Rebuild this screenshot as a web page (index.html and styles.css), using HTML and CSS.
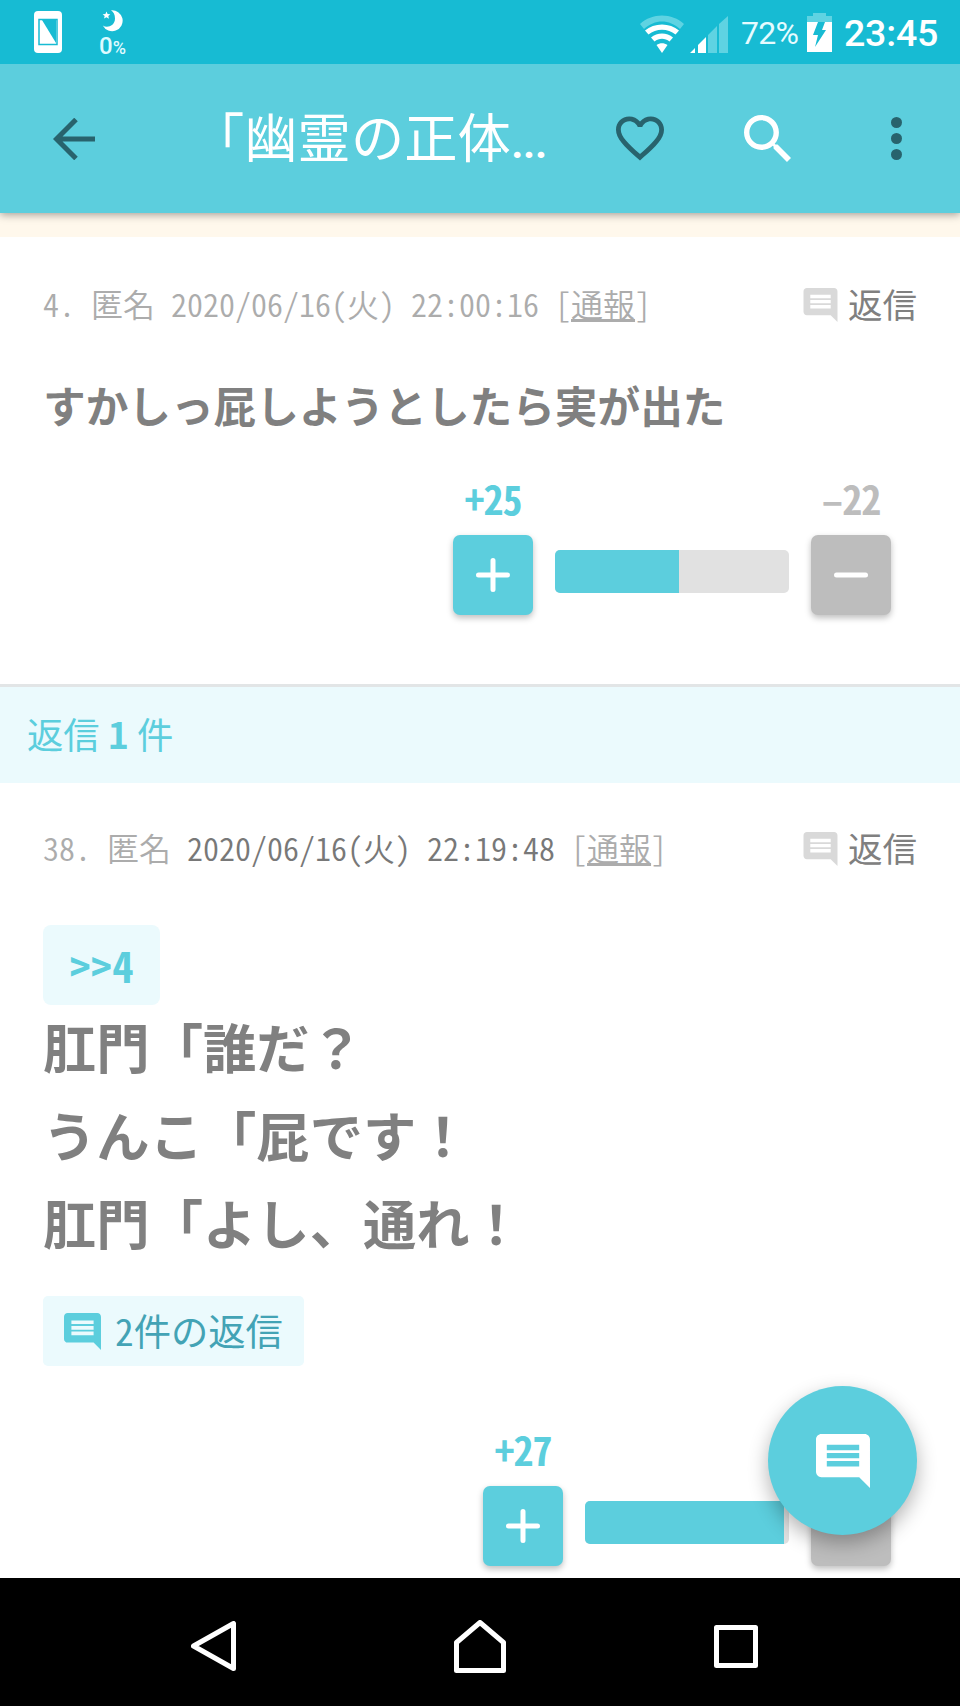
FILE: index.html
```html
<!DOCTYPE html>
<html lang="ja">
<head>
    <meta charset="UTF-8">
    <meta name="viewport" content="width=device-width, initial-scale=1.0">
    <title>「幽霊の正体...</title>
    <link rel="stylesheet" href="styles.css">
</head>
<body>
    <svg width="0" height="0" class="defs">
        <symbol id="comment" viewBox="2 2 20 20">
            <path fill-rule="evenodd" d="M21.99 4c0-1.1-.89-2-1.99-2H4c-1.1 0-2 .9-2 2v12c0 1.1.9 2 2 2h14l4 4-.01-18zM18 14H6v-2h12v2zm0-3H6V9h12v2zm0-3H6V6h12v2z"/>
        </symbol>
    </svg>

    <div class="screen">
        <div class="status-bar">
            <svg class="icon-phone" width="28" height="42" viewBox="0 0 28 42">
                <rect width="28" height="42" rx="4" fill="#fff"/>
                <rect x="5" y="8.500" width="18" height="25" fill="#fff" stroke="#17bbd3" stroke-width="1.500"/>
                <path d="M8 9L22 32V9z" fill="#17bbd3"/>
            </svg>
            <div class="battery-care">
                <svg width="22" height="22" viewBox="0 0 22 22" fill="#fff">
                    <path d="M9 .3A10.500 10.500 0 1 1 .8 15.500C5 18.500 13 16 13 8.500C13 4.500 11.500 2 9 .3z"/>
                    <path d="M4.500 1.500L5.600 4 8.300 4.200 6.300 6 6.900 8.800 4.500 7.300 2 8.600 2.700 6 .6 4.200 3.400 4z"/>
                </svg>
                <span>0<small>%</small></span>
            </div>
            <svg class="icon-wifi" width="44" height="38" viewBox="0 0 44 38">
                <path d="M0 9C12-2.500 32-2.500 44 9L40 14C29 4 15 4 4 14z" fill="#5fd3e2"/>
                <g fill="#fff">
                    <path d="M5 15.500C14 7.500 30 7.500 39 15.500L35.500 19.500C28 13 16 13 8.500 19.500z"/>
                    <path d="M11 22.500C17 17 27 17 33 22.500L29.500 26.500C25 22.800 19 22.800 14.500 26.500z"/>
                    <path d="M16.500 30C20 27.500 24 27.500 27.500 30L22 38z"/>
                </g>
            </svg>
            <svg class="icon-signal" width="38" height="37" viewBox="0 0 38 37">
                <path d="M0 37L5 32V37zM8 29L16 21V37H8z" fill="#fff"/>
                <path d="M18 19L27 10V37H18zM29 8L38 0V37H29z" fill="#5fd3e2"/>
            </svg>
            <span class="percent">72%</span>
            <svg class="icon-battery" width="25" height="39" viewBox="0 0 25 39">
                <path d="M6 0H19V3H25V9H0V3H6z" fill="#5fd3e2"/>
                <path d="M0 9H25V39H0z" fill="#fff"/>
                <path d="M11 9H18L15 17H19L8 34L11 22H6z" fill="#17bbd3"/>
            </svg>
            <span class="clock">23:45</span>
        </div>

        <div class="app-bar">
            <svg class="icon-back" width="42" height="42" viewBox="0 0 42 42" fill="none" stroke="#28636d" stroke-width="5">
                <path d="M42 21H3M23 1.500L3.500 21L23 40.500"/>
            </svg>
            <h1>「幽霊の正体<span class="dots">...</span></h1>
            <svg class="icon-heart" width="48" height="45" viewBox="2 3 20 18.350" fill="#28636d">
                <path d="M16.500 3c-1.740 0-3.410.81-4.500 2.090C10.910 3.810 9.240 3 7.500 3 4.420 3 2 5.420 2 8.500c0 3.780 3.400 6.860 8.550 11.540L12 21.350l1.450-1.320C18.600 15.360 22 12.280 22 8.500 22 5.420 19.580 3 16.500 3zm-4.400 15.550l-.1.100-.1-.1C7.140 14.240 4 11.390 4 8.500 4 6.500 5.500 5 7.500 5c1.540 0 3.040.99 3.570 2.360h1.870C13.460 5.990 14.960 5 16.500 5c2 0 3.500 1.500 3.500 3.500 0 2.890-3.140 5.740-7.900 10.050z"/>
            </svg>
            <svg class="icon-search" width="47" height="47" viewBox="3 3 17.490 17.490" fill="#fff">
                <path d="M15.500 14h-.79l-.28-.27C15.410 12.590 16 11.110 16 9.500 16 5.910 13.090 3 9.500 3S3 5.910 3 9.500 5.910 16 9.500 16c1.610 0 3.090-.59 4.230-1.570l.27.28v.79l5 4.990L20.490 19l-4.990-5zm-6 0C7.010 14 5 11.990 5 9.500S7.010 5 9.500 5 14 7.010 14 9.500 11.990 14 9.500 14z"/>
            </svg>
            <svg class="icon-more" width="11" height="43" viewBox="0 0 11 43" fill="#28636d">
                <circle cx="5.500" cy="5.500" r="5.500"/>
                <circle cx="5.500" cy="21.500" r="5.500"/>
                <circle cx="5.500" cy="37.500" r="5.500"/>
            </svg>
        </div>

        <div class="content">
            <div class="ad-edge"></div>

            <div class="post post-first">
                <div class="post-head">
                    <p class="meta">4. 匿名 2020/06/16(火) 22:00:16 [<a>通報</a>]</p>
                    <div class="reply"><svg width="35" height="34"><use href="#comment"/></svg><span>返信</span></div>
                </div>
                <p class="comment">すかしっ屁しようとしたら実が出た</p>
                <div class="votes">
                    <div class="vote">
                        <span class="count">+25</span>
                        <div class="btn btn-plus"><svg width="34" height="34" viewBox="0 0 34 34"><path d="M17 2.500V31.500M2.500 17H31.500"/></svg></div>
                    </div>
                    <div class="bar"><div class="fill" style="width: 53.200%"></div></div>
                    <div class="vote">
                        <span class="count count-minus">–22</span>
                        <div class="btn btn-minus"><svg width="34" height="34" viewBox="0 0 34 34"><path d="M2.500 17H31.500"/></svg></div>
                    </div>
                </div>
            </div>

            <div class="reply-count">返信<b>1</b>件</div>

            <div class="post">
                <div class="post-head">
                    <p class="meta">38. 匿名 <span class="date">2020/06/16(火) 22:19:48</span> [<a>通報</a>]</p>
                    <div class="reply"><svg width="35" height="34"><use href="#comment"/></svg><span>返信</span></div>
                </div>
                <div class="anchor">&gt;&gt;4</div>
                <p class="comment comment-large">肛門「誰だ？<br>うんこ「屁です！<br>肛門「よし、通れ！</p>
                <div class="replies"><svg width="37" height="37"><use href="#comment"/></svg><span>2件の返信</span></div>
                <div class="votes votes-large">
                    <div class="vote">
                        <span class="count">+27</span>
                        <div class="btn btn-plus"><svg width="34" height="34" viewBox="0 0 34 34"><path d="M17 2.500V31.500M2.500 17H31.500"/></svg></div>
                    </div>
                    <div class="bar"><div class="fill" style="width: 97.600%"></div></div>
                    <div class="vote">
                        <div class="btn btn-minus"><svg width="34" height="34" viewBox="0 0 34 34"><path d="M2.500 17H31.500"/></svg></div>
                    </div>
                </div>
            </div>

            <div class="fab"><svg width="54" height="54"><use href="#comment"/></svg></div>
        </div>

        <div class="nav-bar">
            <svg width="45" height="50" viewBox="0 0 45 50"><path d="M42.500 2.500V47.500L2.500 25z"/></svg>
            <svg class="nav-home" width="52" height="53" viewBox="0 0 52 53"><path d="M2.500 50.500V22.500L26 2.500L49.500 22.500V50.500z"/></svg>
            <svg width="44" height="43" viewBox="0 0 44 43"><path d="M2.500 2.500H41.500V40.500H2.500z"/></svg>
        </div>
    </div>
</body>
</html>
```

FILE: styles.css
```css
* {
    box-sizing: border-box;
}
body {
    margin: 0;
    background-color: white;
    font-family: 'Noto Sans CJK JP', sans-serif;
    color: #808080;
}
h1, p {
    margin: 0;
}
svg {
    display: block;
    flex: none;
}
.defs {
    position: absolute;
}
.screen {
    width: 960px;
    height: 1706px;
    display: flex;
    flex-direction: column;
    overflow: hidden;
}

/* status bar */
.status-bar {
    height: 64px;
    flex: none;
    display: flex;
    align-items: center;
    padding: 0 22px 0 34px;
    background-color: #17bbd3;
    color: white;
    font-family: Roboto, sans-serif;
    z-index: 2;
}
.battery-care {
    width: 29px;
    margin-left: 36px;
    margin-right: auto;
    display: flex;
    flex-direction: column;
    align-items: center;
    gap: 2px;
    font-size: 24px;
    font-weight: 500;
    line-height: 24px;
    padding-top: 5px;
    color: #dffaff;
}
.battery-care span {
    display: flex;
    align-items: baseline;
}
.battery-care small {
    font-size: 18px;
}
.icon-wifi {
    margin: 3px 6px 0 0;
}
.icon-signal {
    margin: 4px 13px 0 0;
}
.percent {
    width: 66px;
    font-size: 32px;
    white-space: nowrap;
    padding-top: 2px;
    letter-spacing: -0.7px;
    color: #e6fbff;
}
.icon-battery {
    margin-right: 12px;
}
.clock {
    width: 94px;
    font-size: 37.500px;
    font-weight: 500;
    white-space: nowrap;
    padding-top: 2px;
    letter-spacing: -0.2px;
}

/* app bar */
.app-bar {
    height: 149px;
    flex: none;
    display: flex;
    align-items: center;
    padding: 0 58px 0 53px;
    background-color: #5ccedd;
    box-shadow: 0 2px 8px rgba(0,0,0,0.35);
    z-index: 1;
}
.app-bar h1 {
    width: 425px;
    margin-left: 96px;
    font-size: 53.300px;
    font-weight: 400;
    line-height: 80px;
    white-space: nowrap;
    color: white;
}
.dots {
    font-family: Roboto, sans-serif;
    font-size: 48px;
    font-weight: 500;
    letter-spacing: -1.500px;
}
.icon-search {
    margin-left: 80px;
}
.icon-more {
    margin-left: auto;
}

/* posts */
.content {
    position: relative;
    flex: 1;
    min-height: 0;
    overflow: hidden;
}
.ad-edge {
    height: 24px;
    background-color: #fff8ec;
}
.post {
    padding: 34px 43px 0;
}
.post-first {
    height: 447px;
    padding-top: 36px;
}
.post-head {
    height: 64px;
    display: flex;
    align-items: center;
    justify-content: space-between;
}
.meta {
    padding-bottom: 4px;
    font-size: 32px;
    line-height: 48px;
    font-weight: 350;
    font-feature-settings: "hwid";
    white-space: nowrap;
    color: #acacac;
}
.meta a {
    text-decoration: underline;
    text-underline-offset: 2px;
    text-decoration-skip-ink: none;
}
.date {
    color: #787878;
}
.reply {
    display: flex;
    align-items: center;
    gap: 10px;
    font-size: 34.500px;
    line-height: 48px;
}
.reply span {
    padding-bottom: 4px;
}
.reply svg {
    fill: #d9d9d9;
}
.comment {
    margin-top: 33px;
    font-size: 42.670px;
    line-height: 70px;
    font-weight: 700;
    white-space: nowrap;
}
.comment-large {
    margin-top: -3px;
    font-size: 53.330px;
    line-height: 88px;
}
.anchor {
    width: 117px;
    height: 80px;
    margin-top: 44px;
    border-radius: 8px;
    background-color: #ebfafd;
    color: #5ccedd;
    font-size: 42.670px;
    font-weight: 700;
    font-feature-settings: "hwid";
    line-height: 79px;
    text-align: center;
}
.reply-count {
    height: 99px;
    display: flex;
    align-items: center;
    padding: 0 0 4px 27px;
    border-top: 3px solid #e2e5e6;
    background-color: #ebfafd;
    font-size: 36.300px;
    color: #5ccedd;
}
.reply-count b {
    margin: 0 8px;
}
.replies {
    width: 261px;
    height: 70px;
    margin-top: 30px;
    display: flex;
    align-items: center;
    padding-left: 21px;
    border-radius: 5px;
    background-color: #ebfafd;
    font-size: 37.300px;
    font-feature-settings: "hwid";
    white-space: nowrap;
    color: #43a3b5;
}
.replies span {
    padding-bottom: 2px;
}
.replies svg {
    margin-right: 14px;
    fill: #5ccedd;
}

/* votes */
.votes {
    height: 140px;
    margin-top: 35px;
    padding-right: 26px;
    display: flex;
    justify-content: flex-end;
    align-items: flex-end;
    gap: 22px;
}
.votes-large {
    margin-top: 60px;
}
.vote {
    display: flex;
    flex-direction: column;
    align-items: center;
}
.count {
    height: 48px;
    margin-bottom: 12px;
    font-size: 40px;
    font-weight: 700;
    font-feature-settings: "hwid";
    letter-spacing: -1px;
    line-height: 46px;
    color: #5ccedd;
}
.count-minus {
    color: #bdbdbd;
}
.btn {
    width: 80px;
    height: 80px;
    display: flex;
    align-items: center;
    justify-content: center;
    border-radius: 7px;
    box-shadow: 0 3px 6px rgba(0,0,0,0.25);
}
.btn svg {
    fill: none;
    stroke: white;
    stroke-width: 5;
    stroke-linecap: round;
}
.btn-plus {
    background-color: #5ccedd;
}
.btn-minus {
    background-color: #bdbdbd;
}
.bar {
    width: 234px;
    height: 43px;
    margin-bottom: 22px;
    border-radius: 5px;
    overflow: hidden;
    background-color: #e1e1e1;
}
.votes-large .bar {
    width: 204px;
}
.fill {
    height: 100%;
    background-color: #5ccedd;
}

/* floating comment button */
.fab {
    position: absolute;
    right: 43px;
    bottom: 43px;
    width: 149px;
    height: 149px;
    display: flex;
    align-items: center;
    justify-content: center;
    border-radius: 50%;
    background-color: #5ccedd;
    box-shadow: 0 8px 20px rgba(0,0,0,0.3);
}
.fab svg {
    fill: white;
}

/* android navigation */
.nav-bar {
    height: 128px;
    flex: none;
    display: flex;
    align-items: center;
    justify-content: space-between;
    padding: 8px 202px 0 191px;
    background-color: black;
}
.nav-bar svg {
    fill: none;
    stroke: white;
    stroke-width: 5;
    stroke-linejoin: round;
}
.nav-bar .nav-home {
    margin-left: 10px;
}
```
